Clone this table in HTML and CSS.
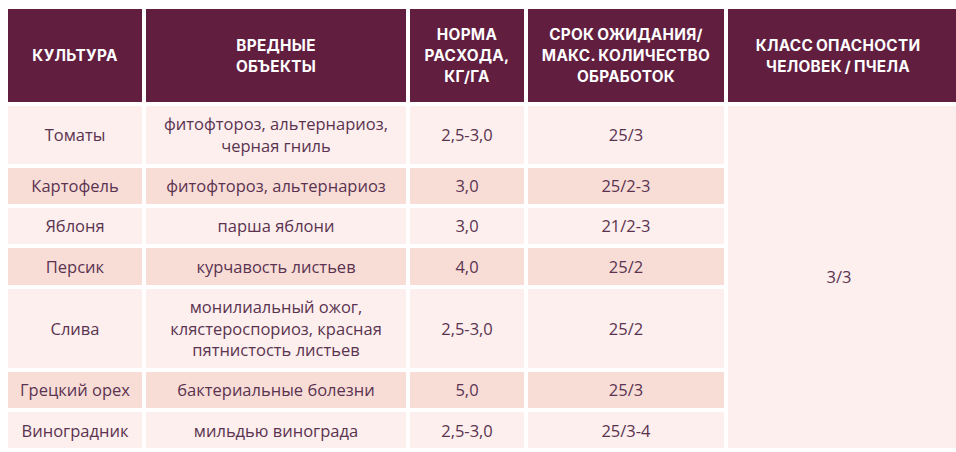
FILE: index.html
```html
<!DOCTYPE html>
<html lang="ru">
<head>
<meta charset="utf-8">
<title>Таблица применения</title>
<link rel="stylesheet" href="styles.css">
</head>
<body>
<div class="wrap">
<table class="reg">
  <colgroup>
    <col class="c1"><col class="c2"><col class="c3"><col class="c4"><col class="c5">
  </colgroup>
  <thead>
    <tr>
      <th>Культура</th>
      <th>Вредные<br>объекты</th>
      <th>Норма<br>расхода,<br>кг/га</th>
      <th>Срок ожидания/<br>макс. количество<br>обработок</th>
      <th class="last">Класс опасности<br>человек / пчела</th>
    </tr>
  </thead>
  <tbody>
    <tr class="light">
      <td>Томаты</td>
      <td>фитофтороз, альтернариоз,<br>черная гниль</td>
      <td>2,5-3,0</td>
      <td>25/3</td>
      <td class="last hazard" rowspan="7">3/3</td>
    </tr>
    <tr class="dark">
      <td>Картофель</td>
      <td>фитофтороз, альтернариоз</td>
      <td>3,0</td>
      <td>25/2-3</td>
    </tr>
    <tr class="light">
      <td>Яблоня</td>
      <td>парша яблони</td>
      <td>3,0</td>
      <td>21/2-3</td>
    </tr>
    <tr class="dark">
      <td>Персик</td>
      <td>курчавость листьев</td>
      <td>4,0</td>
      <td>25/2</td>
    </tr>
    <tr class="light">
      <td>Слива</td>
      <td>монилиальный ожог,<br>клястероспориоз, красная<br>пятнистость листьев</td>
      <td>2,5-3,0</td>
      <td>25/2</td>
    </tr>
    <tr class="dark">
      <td>Грецкий орех</td>
      <td>бактериальные болезни</td>
      <td>5,0</td>
      <td>25/3</td>
    </tr>
    <tr class="light">
      <td>Виноградник</td>
      <td>мильдью винограда</td>
      <td>2,5-3,0</td>
      <td>25/3-4</td>
    </tr>
  </tbody>
</table>
</div>
</body>
</html>
```

FILE: styles.css
```css
html, body {
  margin: 0;
  padding: 0;
  background: #ffffff;
  overflow: hidden;
}

.wrap {
  width: 956px;
  height: 452px;
  overflow: hidden;
  padding: 5px 0 0 4px;
  box-sizing: border-box;
}

.reg {
  border-collapse: separate;
  border-spacing: 4px;
  table-layout: fixed;
  width: 956px;
  margin: 0;
}

.c1 { width: 134px; }
.c2 { width: 260px; }
.c3 { width: 114px; }
.c4 { width: 196px; }
.c5 { width: 228px; }

.reg th {
  background: #621e3f;
  color: #ffffff;
  font-family: Inter, "Open Sans", "Liberation Sans", sans-serif;
  font-weight: 700;
  font-size: 15.3px;
  line-height: 21px;
  letter-spacing: 0.3px;
  word-spacing: -1px;
  text-transform: uppercase;
  text-align: center;
  vertical-align: middle;
  padding: 15px 2px;
  height: 63px;
}

.reg td {
  font-family: "Open Sans", "Liberation Sans", sans-serif;
  font-weight: 400;
  font-size: 16.5px;
  line-height: 21.5px;
  color: #5b3350;
  text-align: center;
  vertical-align: middle;
  padding: 7.4px 4px;
}

.reg th.last {
  padding-right: 10px;
}

.reg td.last {
  padding-left: 4px;
  padding-right: 10px;
}

.light td { background: #fcefed; }
.dark td { background: #f8ddd7; }
.reg td.hazard { background: #fcefed; }
```
